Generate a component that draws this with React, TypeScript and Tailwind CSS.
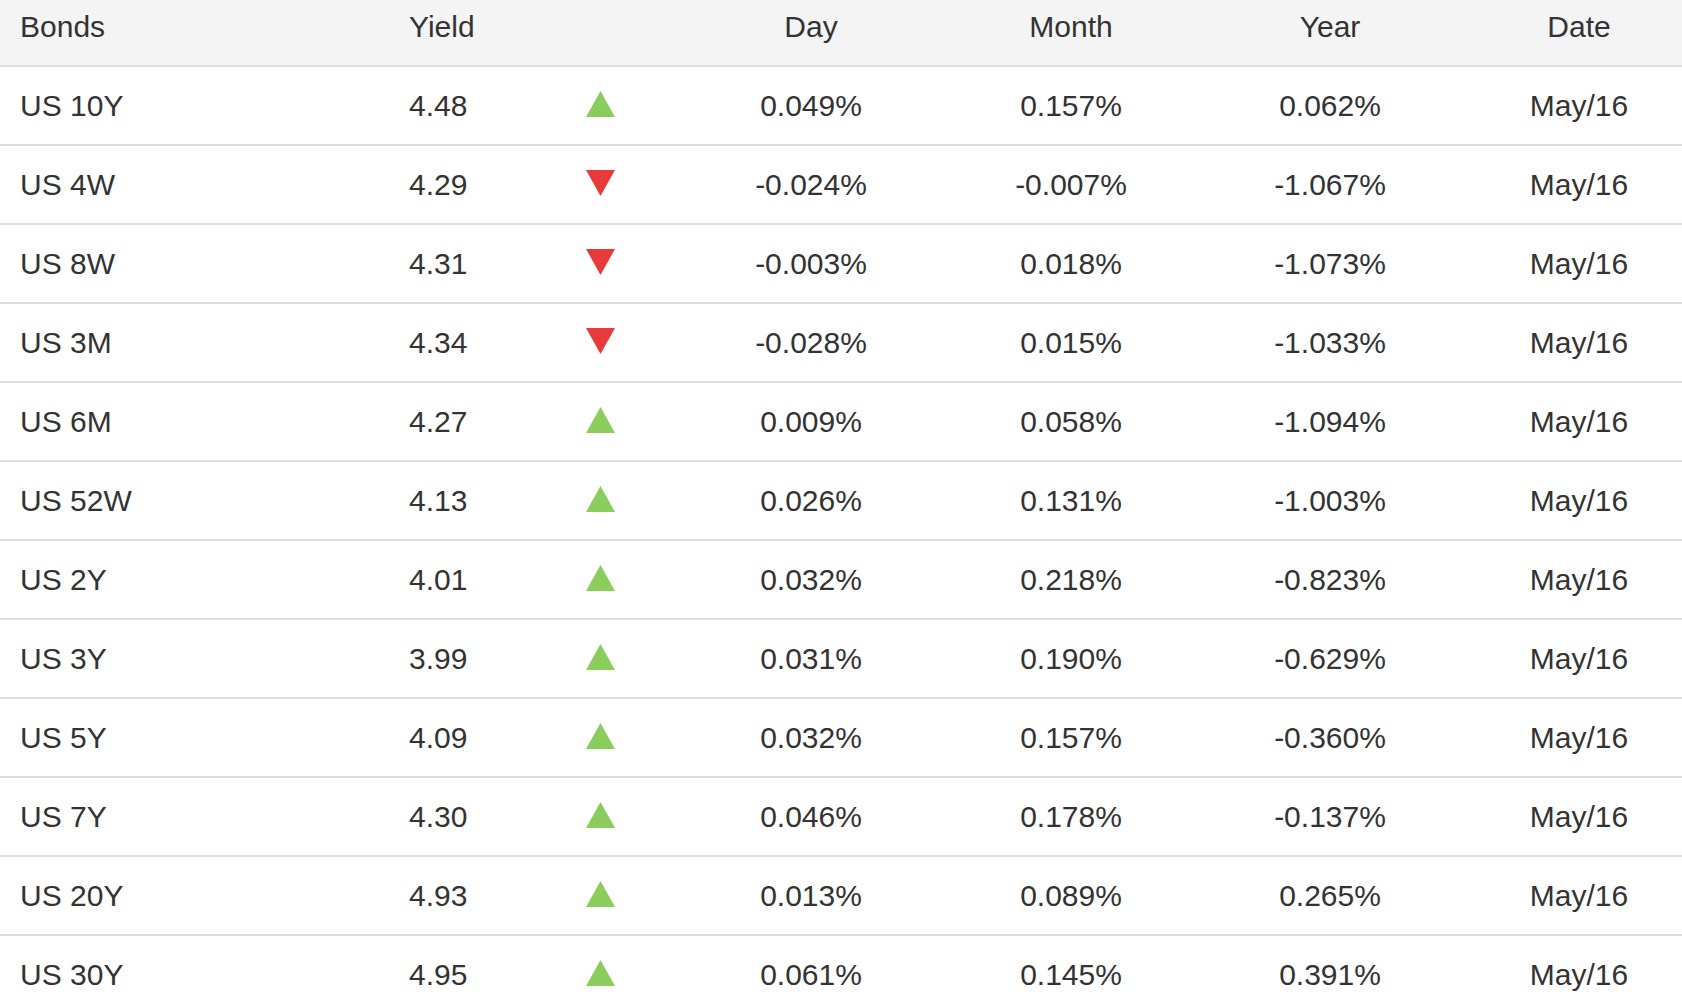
import React from "react";

type Row = {
  name: string;
  yld: string;
  up: boolean;
  day: string;
  month: string;
  year: string;
  date: string;
};

const rows: Row[] = [
  { name: "US 10Y", yld: "4.48", up: true, day: "0.049%", month: "0.157%", year: "0.062%", date: "May/16" },
  { name: "US 4W", yld: "4.29", up: false, day: "-0.024%", month: "-0.007%", year: "-1.067%", date: "May/16" },
  { name: "US 8W", yld: "4.31", up: false, day: "-0.003%", month: "0.018%", year: "-1.073%", date: "May/16" },
  { name: "US 3M", yld: "4.34", up: false, day: "-0.028%", month: "0.015%", year: "-1.033%", date: "May/16" },
  { name: "US 6M", yld: "4.27", up: true, day: "0.009%", month: "0.058%", year: "-1.094%", date: "May/16" },
  { name: "US 52W", yld: "4.13", up: true, day: "0.026%", month: "0.131%", year: "-1.003%", date: "May/16" },
  { name: "US 2Y", yld: "4.01", up: true, day: "0.032%", month: "0.218%", year: "-0.823%", date: "May/16" },
  { name: "US 3Y", yld: "3.99", up: true, day: "0.031%", month: "0.190%", year: "-0.629%", date: "May/16" },
  { name: "US 5Y", yld: "4.09", up: true, day: "0.032%", month: "0.157%", year: "-0.360%", date: "May/16" },
  { name: "US 7Y", yld: "4.30", up: true, day: "0.046%", month: "0.178%", year: "-0.137%", date: "May/16" },
  { name: "US 20Y", yld: "4.93", up: true, day: "0.013%", month: "0.089%", year: "0.265%", date: "May/16" },
  { name: "US 30Y", yld: "4.95", up: true, day: "0.061%", month: "0.145%", year: "0.391%", date: "May/16" },
];

const cols = "grid grid-cols-[390px_146px_128px_294px_226px_292px_206px]";

function Triangle({ up }: { up: boolean }) {
  return (
    <svg width="29" height="26" viewBox="0 0 29 26" className="block">
      {up ? (
        <polygon points="14.5,0 29,26 0,26" fill="#8acd5c" />
      ) : (
        <polygon points="0,0 29,0 14.5,26" fill="#e8393b" />
      )}
    </svg>
  );
}

export default function App() {
  return (
    <div
      className="w-[1682px] bg-white text-[#333333] text-[30px]"
      style={{ fontFamily: '"Liberation Sans", Arial, sans-serif' }}
    >
      <div className={`${cols} h-[67px] bg-[#f4f4f4] border-b-2 border-[#dedede] leading-[36px]`}>
        <div className="pl-[20px] pt-[9px]">Bonds</div>
        <div className="pl-[19px] pt-[9px]">Yield</div>
        <div className="pt-[9px]"></div>
        <div className="pt-[9px] text-center">Day</div>
        <div className="pt-[9px] text-center">Month</div>
        <div className="pt-[9px] text-center">Year</div>
        <div className="pt-[9px] text-center">Date</div>
      </div>
      {rows.map((r) => (
        <div
          key={r.name}
          className={`${cols} h-[79px] items-center border-b-2 border-[#dedede] leading-[36px]`}
        >
          <div className="pl-[20px]">{r.name}</div>
          <div className="pl-[19px]">{r.yld}</div>
          <div className="flex justify-center -mt-[3px]">
            <Triangle up={r.up} />
          </div>
          <div className="text-center">{r.day}</div>
          <div className="text-center">{r.month}</div>
          <div className="text-center">{r.year}</div>
          <div className="text-center">{r.date}</div>
        </div>
      ))}
    </div>
  );
}
